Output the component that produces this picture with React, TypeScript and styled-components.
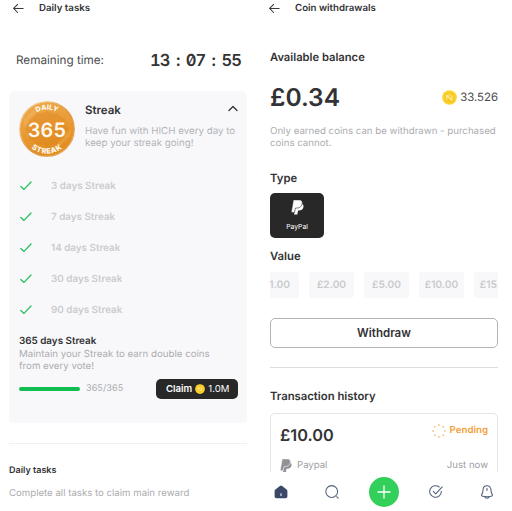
import React from "react";
import styled, { createGlobalStyle } from "styled-components";

const GlobalStyle = createGlobalStyle`
  * { box-sizing: border-box; }
  body { margin: 0; background: #fff; font-family: Inter, "Liberation Sans", sans-serif; color: #333335; overflow: hidden; text-rendering: geometricPrecision; }
  svg { display: block; flex: none; }
`;

const Screens = styled.div`
  display: grid;
  grid-template-columns: 256px 256px;
  width: 512px;
  height: 511px;
  overflow: hidden;
`;

const Screen = styled.section`
  display: flex;
  flex-direction: column;
  height: 511px;
  overflow: hidden;
`;

const Text = styled.div<{ $size: number; $weight?: number; $color?: string; $line?: number; $track?: number }>`
  font-size: ${(p) => p.$size}px;
  font-weight: ${(p) => p.$weight ?? 400};
  color: ${(p) => p.$color ?? "#333335"};
  line-height: ${(p) => p.$line ?? 16}px;
  letter-spacing: ${(p) => p.$track ?? 0}px;
  white-space: nowrap;
`;

const Header = styled.header`
  display: flex;
  align-items: center;
  gap: 15px;
  height: 17px;
  padding-left: 13px;
  flex: none;
`;

const TimerRow = styled.div`
  display: flex;
  align-items: center;
  justify-content: space-between;
  height: 20px;
  margin: 33px 15px 0 16px;
`;

const Clock = styled.div`
  display: flex;
  width: 91px;
  justify-content: space-between;
  font-size: 16.5px;
  font-weight: 600;
  line-height: 20px;
  letter-spacing: -0.9px;
  font-feature-settings: "tnum", "zero";
`;

const StreakCard = styled.div`
  display: flex;
  flex-direction: column;
  height: 332px;
  margin: 21px 9px 0;
  padding: 10px 9px 0 10px;
  border-radius: 5px;
  background: #f8f8fa;
`;

const StreakHead = styled.div`
  display: grid;
  grid-template-columns: 56px 1fr;
  column-gap: 10px;
  height: 69px;
`;

const StreakTitle = styled.div`
  display: flex;
  justify-content: space-between;
  height: 25px;
  padding-top: 1px;
`;

const ChevronBox = styled.div`
  padding-top: 3px;
`;

const Steps = styled.div`
  display: grid;
  grid-auto-rows: 31.1px;
`;

const Step = styled.div`
  display: grid;
  grid-template-columns: 32px 1fr;
  align-items: center;
`;

const Goal = styled.div`
  padding-top: 8px;
`;

const ProgressRow = styled.div`
  display: flex;
  align-items: center;
  height: 20px;
  margin-top: 6px;
`;

const Progress = styled.div`
  width: 61px;
  height: 3.4px;
  margin-right: 6px;
  border-radius: 2px;
  background: #10bd50;
`;

const Claim = styled.button`
  display: flex;
  align-items: center;
  gap: 3px;
  width: 82px;
  height: 20px;
  margin-left: auto;
  padding: 0 0 0 10px;
  border: 0;
  border-radius: 5px;
  background: #282828;
  font-family: inherit;
`;

const Divider = styled.hr<{ $color: string; $gap: string }>`
  flex: none;
  height: 1px;
  margin: ${(p) => p.$gap};
  border: 0;
  background: ${(p) => p.$color};
`;

const TaskIntro = styled.div`
  display: flex;
  flex-direction: column;
  gap: 7px;
  padding: 19px 0 0 9px;
`;

const Body = styled.div`
  flex: 1;
  min-height: 0;
  display: flex;
  flex-direction: column;
  padding: 32px 14px 0;
  overflow: hidden;
`;

const BalanceRow = styled.div`
  display: flex;
  align-items: center;
  justify-content: space-between;
  height: 30px;
  margin: 17px 0 14px;
`;

const CoinAmount = styled.div`
  display: flex;
  align-items: center;
  gap: 3px;
`;

const TypeSection = styled.div`
  display: flex;
  flex-direction: column;
  flex: none;
  padding-top: 20px;
`;

const TypeButton = styled.button`
  display: flex;
  flex-direction: column;
  align-items: center;
  flex: none;
  width: 54px;
  height: 45px;
  margin: 7px 0 10px;
  padding: 7px 0 0;
  gap: 4px;
  border: 0;
  border-radius: 5px;
  background: #292829;
  font-family: inherit;
`;

const Chips = styled.div`
  display: flex;
  justify-content: center;
  gap: 10px;
  flex: none;
  margin-top: 8px;
  padding-left: 5px;
  overflow: hidden;
`;

const Chip = styled.div`
  flex: none;
  width: 45px;
  height: 26px;
  border-radius: 3px;
  background: #f8f8fa;
  color: #c9cacd;
  font-size: 10.2px;
  font-weight: 600;
  line-height: 27px;
  text-align: center;
`;

const Withdraw = styled.button`
  flex: none;
  height: 30px;
  margin-top: 20px;
  padding: 0;
  border: 1px solid #b2b4b4;
  border-radius: 5px;
  background: #fff;
  color: #333335;
  font: 600 11.5px/28px Inter, sans-serif;
`;

const Transaction = styled.article`
  display: flex;
  flex-direction: column;
  gap: 11px;
  flex: none;
  height: 80px;
  margin-top: 9px;
  padding: 9px 9px 0;
  border: 1px solid #e5e5e8;
  border-radius: 5px;
`;

const Spread = styled.div`
  display: flex;
  justify-content: space-between;
`;

const Status = styled.div`
  display: flex;
  align-items: center;
  gap: 4px;
  height: 16px;
`;

const Method = styled.div`
  display: flex;
  align-items: center;
  gap: 5px;
`;

const Nav = styled.nav`
  display: grid;
  grid-template-columns: repeat(5, 51.6px);
  justify-content: center;
  justify-items: center;
  align-items: center;
  flex: none;
  height: 39px;
  background: #fff;
`;

const AddButton = styled.div`
  display: grid;
  place-items: center;
  width: 30px;
  height: 30px;
  border-radius: 50%;
  background: #32d05b;
`;

const Arrow = () => (
  <svg width="11" height="11" viewBox="0 0 11 11" fill="none" stroke="#3a3a3c" strokeWidth="1.05" strokeLinecap="round" strokeLinejoin="round">
    <path d="M10.2 5.4H.7M4.6 1.3.6 5.4l4 4.1" />
  </svg>
);

const Check = () => (
  <svg width="14" height="12" viewBox="0 0 14 12" fill="none" stroke="#2cc163" strokeWidth="1.35" strokeLinecap="round" strokeLinejoin="round">
    <path d="M1.8 6.4 5 9.400l7-7.4" />
  </svg>
);

const Coin = ({ size }: { size: number }) => (
  <svg width={size} height={size} viewBox="0 0 16 16">
    <circle cx="8" cy="8" r="7.8" fill="#fbd42f" />
    <circle cx="8" cy="8" r="6" fill="#f8c923" />
    <path d="M5.2 5v5.200M5.400 5.600l4.600 5M10.500 5.600v5.600M7.800 4.200v2" stroke="#fff2ac" strokeWidth="1.1" fill="none" />
  </svg>
);

const PayPal = ({ width, height, color, gap }: { width: number; height: number; color: string; gap: string }) => (
  <svg width={width} height={height} viewBox="0 0 24 28">
    <path d="M9 7h9c4 0 6 2.700 5 6.400-1 4.200-4 6-8 6h-2l-1.300 7.800H5.500z" fill={color} />
    <path d="M4.300 0h9.700c5.200 0 7.400 3 6.400 7.700-1 5-4.600 7.300-9.400 7.300H8.200L6.400 23.500H.3z" fill={color} stroke={gap} strokeWidth="1.100" />
    <path d="M4.300.2H14c5 0 7.100 2.800 6.200 7.500" fill="none" stroke={color} strokeWidth="1" />
  </svg>
);

const Medal = () => (
  <svg width="56" height="56" viewBox="0 0 56 56">
    <defs>
      <linearGradient id="medalFace" x1="0" y1="0" x2="0.3" y2="1">
        <stop offset="0" stopColor="#eda94e" />
        <stop offset=".5" stopColor="#e99d38" />
        <stop offset="1" stopColor="#e28c21" />
      </linearGradient>
      <linearGradient id="medalRim" x1="0" y1="0" x2="1" y2="1">
        <stop offset="0" stopColor="#e3ab5d" />
        <stop offset=".2" stopColor="#f5ca8a" />
        <stop offset=".55" stopColor="#dd963d" />
        <stop offset="1" stopColor="#edae5c" />
      </linearGradient>
      <path id="medalTop" d="M8.500 28a19.500 19.500 0 0 1 39 0" />
      <path id="medalBottom" d="M3.300 28a24.700 24.700 0 0 0 49.400 0" />
    </defs>
    <circle cx="28" cy="28" r="27.200" fill="url(#medalFace)" stroke="url(#medalRim)" strokeWidth="1.300" />
    <path d="M10 17q5 0 7-5 6 2 11-2 5 4 11 2 2 5 7 5-1 6 4 11-5 5-4 11-5 0-7 5-6-2-11 2-5-4-11-2-2-5-7-5 1-6-4-11 5-5 4-11z" fill="#dd8219" opacity=".35" />
    <path d="M5 18 18 5l6 0L4 27zM51 35 35 51l-6 1 23-24z" fill="#ffd08b" opacity=".2" />
    <g fill="#fff9ef" fontFamily="Inter, sans-serif" textAnchor="middle">
      <text x="28" y="35.500" fontSize="19.800" fontWeight="600" letterSpacing=".3">365</text>
      <text fontSize="7" fontWeight="800" letterSpacing=".1"><textPath href="#medalTop" startOffset="50%">DAILY</textPath></text>
      <text fontSize="7.500" fontWeight="800" letterSpacing=".5"><textPath href="#medalBottom" startOffset="50%">STREAK</textPath></text>
    </g>
  </svg>
);

const Spinner = () => (
  <svg width="14" height="14" viewBox="0 0 14 14" fill="none" stroke="#f2a038" strokeWidth="1.500" strokeLinecap="round">
    <path d="M7 1h.01M11.200 2.800h.01M13 7h.01M11.200 11.200h.01M7 13h.01M2.800 11.200h.01M1 7h.01M2.800 2.800h.01" />
  </svg>
);

const Home = () => (
  <svg width="14" height="14" viewBox="0 0 14 14">
    <path d="M.6 6.200q0-1 .8-1.600L5.900 1q1.100-.8 2.200 0l4.500 3.600q.8.600.8 1.600v5.200q0 1.800-1.900 1.800h-9Q.6 13.200.6 11.400z" fill="#3a4769" />
    <path d="M7 8.700v2" stroke="#fff" strokeWidth="1" strokeLinecap="round" />
  </svg>
);

const Search = () => (
  <svg width="14" height="14" viewBox="0 0 14 14" fill="none" stroke="#536079" strokeWidth="1.050" strokeLinecap="round">
    <circle cx="6.700" cy="6.500" r="5.900" />
    <path d="m11.700 11.700 1.500 1.500" />
  </svg>
);

const Done = () => (
  <svg width="14" height="14" viewBox="0 0 14 14" fill="none" stroke="#536079" strokeWidth="1.050" strokeLinecap="round" strokeLinejoin="round">
    <path d="M10.200 2A5.800 5.800 0 1 0 12.300 6.200" />
    <path d="m4.200 6.400 2.500 2.500 6.500-7" />
  </svg>
);

const Bell = () => (
  <svg width="14" height="14" viewBox="0 0 14 14" fill="none" stroke="#536079" strokeWidth="1.050" strokeLinecap="round" strokeLinejoin="round">
    <path d="M7 .8c-2.600 0-4 1.800-4 4.200 0 2.400-.4 3.300-1.200 4.400-.6.9-.2 1.600.7 1.800 3 .6 6 .6 9 0 .9-.2 1.300-.9.7-1.800C11.400 8.300 11 7.400 11 5 11 2.600 9.600.8 7 .8zM7 3.300v2.200M4.700 11.800c.5 1.900 4.100 1.900 4.600 0" />
  </svg>
);

const days = [3, 7, 14, 30, 90];
const values = ["£1.00", "£2.00", "£5.00", "£10.00", "£15.00"];
const muted = "#acacb0";

function DailyTasks() {
  return (
    <Screen>
      <Header>
        <Arrow />
        <Text $size={9.7} $weight={600} $line={17}>Daily tasks</Text>
      </Header>
      <TimerRow>
        <Text $size={11.7} $color="#4b4b4d">Remaining time:</Text>
        <Clock><span>13</span><span>:</span><span>07</span><span>:</span><span>55</span></Clock>
      </TimerRow>
      <StreakCard>
        <StreakHead>
          <Medal />
          <div>
            <StreakTitle>
              <Text $size={11.5} $weight={600}>Streak</Text>
              <ChevronBox>
                <svg width="10" height="7" viewBox="0 0 10 7" fill="none" stroke="#333" strokeWidth="1.300" strokeLinecap="round" strokeLinejoin="round"><path d="m1 5.500 4-4 4 4" /></svg>
              </ChevronBox>
            </StreakTitle>
            <Text $size={9.75} $color="#b4b4b9" $line={11.8}>Have fun with HICH every day to<br />keep your streak going!</Text>
          </div>
        </StreakHead>
        <Steps>
          {days.map((n) => (
            <Step key={n}>
              <Check />
              <Text $size={9.85} $weight={600} $color="#cccccf">{n} days Streak</Text>
            </Step>
          ))}
        </Steps>
        <Goal>
          <Text $size={9.85} $weight={600} $line={16}>365 days Streak</Text>
          <Text $size={9.7} $color={muted} $line={11.8}>Maintain your Streak to earn double coins<br />from every vote!</Text>
        </Goal>
        <ProgressRow>
          <Progress />
          <Text $size={9.2} $color={muted}>365/365</Text>
          <Claim>
            <Text $size={9.6} $weight={600} $color="#fff">Claim</Text>
            <Coin size={10} />
            <Text $size={9.6} $color="#fff">1.0M</Text>
          </Claim>
        </ProgressRow>
      </StreakCard>
      <Divider $color="#f0f0f2" $gap="20px 9px 0" />
      <TaskIntro>
        <Text $size={9} $weight={600}>Daily tasks</Text>
        <Text $size={9.65} $color={muted}>Complete all tasks to claim main reward</Text>
      </TaskIntro>
    </Screen>
  );
}

function CoinWithdrawals() {
  return (
    <Screen>
      <Header>
        <Arrow />
        <Text $size={9.7} $weight={600} $line={17}>Coin withdrawals</Text>
      </Header>
      <Body>
        <Text $size={11.2} $weight={600}>Available balance</Text>
        <BalanceRow>
          <Text $size={24.5} $weight={600} $line={30}>£0.34</Text>
          <CoinAmount>
            <Coin size={15} />
            <Text $size={11.4} $color="#4b4b4d">33.526</Text>
          </CoinAmount>
        </BalanceRow>
        <Text $size={9.68} $color={muted} $line={11.8}>Only earned coins can be withdrawn - purchased<br />coins cannot.</Text>
        <TypeSection>
          <Text $size={11.3} $weight={600}>Type</Text>
          <TypeButton>
            <PayPal width={13} height={15} color="#fff" gap="#292829" />
            <Text $size={6.8} $color="#fff" $line={15}>PayPal</Text>
          </TypeButton>
        </TypeSection>
        <Text $size={11.3} $weight={600}>Value</Text>
        <Chips>{values.map((v) => <Chip key={v}>{v}</Chip>)}</Chips>
        <Withdraw>Withdraw</Withdraw>
        <Divider $color="#dddddf" $gap="19px 0 20px" />
        <Text $size={11.3} $weight={600}>Transaction history</Text>
        <Transaction>
          <Spread>
            <Text $size={16.3} $weight={600} $line={24}>£10.00</Text>
            <Status>
              <Spinner />
              <Text $size={9.7} $weight={600} $color="#f2a038">Pending</Text>
            </Status>
          </Spread>
          <Spread>
            <Method>
              <PayPal width={12} height={14} color="#919397" gap="#fff" />
              <Text $size={9.6} $color="#a0a0a4">Paypal</Text>
            </Method>
            <Text $size={9.6} $color="#a0a0a4">Just now</Text>
          </Spread>
        </Transaction>
      </Body>
      <Nav>
        <Home />
        <Search />
        <AddButton>
          <svg width="14" height="14" viewBox="0 0 14 14" stroke="#fff" strokeWidth="1.300" strokeLinecap="round"><path d="M7 1v12M1 7h12" /></svg>
        </AddButton>
        <Done />
        <Bell />
      </Nav>
    </Screen>
  );
}

export default function App() {
  return (
    <>
      <GlobalStyle />
      <Screens>
        <DailyTasks />
        <CoinWithdrawals />
      </Screens>
    </>
  );
}
